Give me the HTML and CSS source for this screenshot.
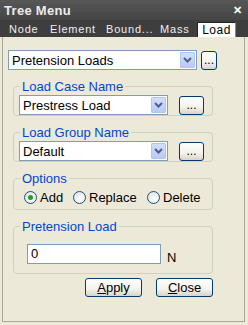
FILE: index.html
```html
<!DOCTYPE html>
<html lang="en">

<head>
    <meta charset="UTF-8">
    <title>Tree Menu</title>
    <link rel="stylesheet" href="styles.css">
</head>

<body>
    <div class="window">
        <div class="titlebar">
            <span class="title">Tree Menu</span>
            <span class="close">&#x2715;</span>
        </div>
        <div class="tabs">
            <span class="tab t-node">Node</span>
            <span class="tab t-element">Element</span>
            <span class="tab t-bound">Bound...</span>
            <span class="tab t-mass">Mass</span>
            <span class="tab active">Load</span>
        </div>
        <div class="panel">
            <div class="inner">
                <div class="row top-row">
                    <div class="select wide">
                        <span class="value">Pretension Loads</span>
                        <span class="arrow"><svg width="9" height="6" viewBox="0 0 9 6"><path d="M1 1 L4.5 4.5 L8 1" fill="none" stroke="#4d6185" stroke-width="2"/></svg></span>
                    </div>
                    <button class="btn small">...</button>
                </div>

                <fieldset class="group">
                    <legend>Load Case Name</legend>
                    <div class="row">
                        <div class="select">
                            <span class="value">Prestress Load</span>
                            <span class="arrow"><svg width="9" height="6" viewBox="0 0 9 6"><path d="M1 1 L4.5 4.5 L8 1" fill="none" stroke="#4d6185" stroke-width="2"/></svg></span>
                        </div>
                        <button class="btn dots">...</button>
                    </div>
                </fieldset>

                <fieldset class="group">
                    <legend>Load Group Name</legend>
                    <div class="row">
                        <div class="select">
                            <span class="value">Default</span>
                            <span class="arrow"><svg width="9" height="6" viewBox="0 0 9 6"><path d="M1 1 L4.5 4.5 L8 1" fill="none" stroke="#4d6185" stroke-width="2"/></svg></span>
                        </div>
                        <button class="btn dots">...</button>
                    </div>
                </fieldset>

                <fieldset class="group options">
                    <legend>Options</legend>
                    <div class="radios">
                        <label class="radio r-add checked"><span class="circle"></span>Add</label>
                        <label class="radio r-replace"><span class="circle"></span>Replace</label>
                        <label class="radio"><span class="circle"></span>Delete</label>
                    </div>
                </fieldset>

                <fieldset class="group load">
                    <legend>Pretension Load</legend>
                    <div class="row input-row">
                        <div class="textbox">0</div>
                        <span class="unit">N</span>
                    </div>
                </fieldset>

                <div class="actions">
                    <button class="btn action"><u>A</u>pply</button>
                    <button class="btn action"><u>C</u>lose</button>
                </div>
            </div>
        </div>
    </div>
</body>

</html>
```

FILE: styles.css
```css
* {
    box-sizing: border-box;
}

body {
    margin: 0;
    width: 248px;
    height: 325px;
    overflow: hidden;
    font-family: "Liberation Sans", Arial, sans-serif;
    background: #ece9d8;
}

.window {
    display: flex;
    flex-direction: column;
    height: 325px;
}

/* Title bar */

.titlebar {
    height: 20px;
    display: flex;
    align-items: center;
    justify-content: space-between;
    padding: 0 6px 0 4px;
    background: linear-gradient(#575757, #454545);
    color: #ececec;
}

.title {
    font-size: 13px;
    font-weight: bold;
    letter-spacing: 0.3px;
}

.close {
    font-size: 11px;
    font-weight: bold;
    color: #fff;
}

/* Tabs */

.tabs {
    height: 17px;
    display: flex;
    align-items: flex-end;
    background: #3e3e3e;
    padding-left: 9px;
}

.tab {
    font-size: 11px;
    color: #eeeeee;
    letter-spacing: 0.8px;
    line-height: 15px;
    white-space: nowrap;
}

.t-node {
    width: 41px;
}

.t-element {
    width: 56px;
}

.t-bound {
    width: 54px;
}

.t-mass {
    width: 37px;
}

.tab.active {
    width: 39px;
    height: 15px;
    text-align: center;
    font-size: 12px;
    letter-spacing: 0.5px;
    background: #fff;
    color: #000;
    border: 1px solid #222;
    border-bottom: none;
    border-right: 1px solid #888;
}

/* Panel */

.panel {
    flex: 1;
    padding: 0 3px 3px 2px;
    background: #ece9d8;
}

.inner {
    height: 100%;
    border: 1px solid #a9a798;
    border-top: none;
    padding: 13px 0 0 5px;
}

.row {
    display: flex;
    align-items: center;
}

/* Combo boxes */

.select {
    width: 149px;
    height: 20px;
    border: 1px solid #7f9db9;
    background: #fff;
    display: flex;
    align-items: center;
    justify-content: space-between;
    padding: 1px 1px 1px 3px;
    font-size: 13px;
    color: #000;
}

.select.wide {
    width: 189px;
}

.arrow {
    width: 15px;
    height: 16px;
    background: linear-gradient(#d3defc, #b8cbf5);
    border: 1px solid #b2c5f1;
    border-radius: 1px;
    display: flex;
    align-items: center;
    justify-content: center;
}

/* Buttons */

.btn {
    font-family: inherit;
    font-size: 12px;
    color: #000;
    border: 1px solid #003c74;
    border-radius: 3px;
    background: linear-gradient(#ffffff, #f3f2ec 60%, #d8d4c6);
    padding: 0;
    line-height: 14px;
}

.btn.small {
    width: 16px;
    height: 19px;
    margin-left: 4px;
}

.btn.dots {
    width: 25px;
    height: 19px;
    margin-left: 11px;
}

/* Group boxes */

.group {
    margin: 9px 0 0 5px;
    width: 200px;
    border: 1px solid #d0d0bf;
    border-radius: 4px;
    padding: 1px 0 0 5px;
}

.group legend {
    font-size: 13px;
    color: #0046d5;
    padding: 0 2px;
    margin-left: 1px;
    line-height: 15px;
}

/* Radio buttons */

.options {
    padding-bottom: 1px;
}

.radios {
    display: flex;
    padding: 3px 0 3px 5px;
}

.radio {
    display: flex;
    align-items: center;
    font-size: 13px;
}

.r-add {
    width: 49px;
}

.r-replace {
    width: 74px;
}

.circle {
    width: 13px;
    height: 13px;
    border: 1px solid #1c5180;
    border-radius: 50%;
    background: radial-gradient(circle at 60% 60%, #fff, #dcdcd6);
    margin-right: 3px;
    display: flex;
    align-items: center;
    justify-content: center;
}

.radio.checked .circle::after {
    content: "";
    width: 5px;
    height: 5px;
    border-radius: 50%;
    background: #21a121;
}

/* Pretension load input */

.group.load {
    margin-top: 9px;
    padding: 9px 0 8px 5px;
}

.input-row {
    padding-left: 8px;
}

.textbox {
    width: 134px;
    height: 20px;
    border: 1px solid #7f9db9;
    background: #fff;
    font-size: 13px;
    padding: 1px 3px;
}

.unit {
    font-size: 13px;
    margin: 7px 0 0 6px;
}

.actions {
    display: flex;
    justify-content: flex-end;
    gap: 14px;
    width: 205px;
    margin-top: 4px;
}

.btn.action {
    width: 57px;
    height: 19px;
    font-size: 13px;
}
```
